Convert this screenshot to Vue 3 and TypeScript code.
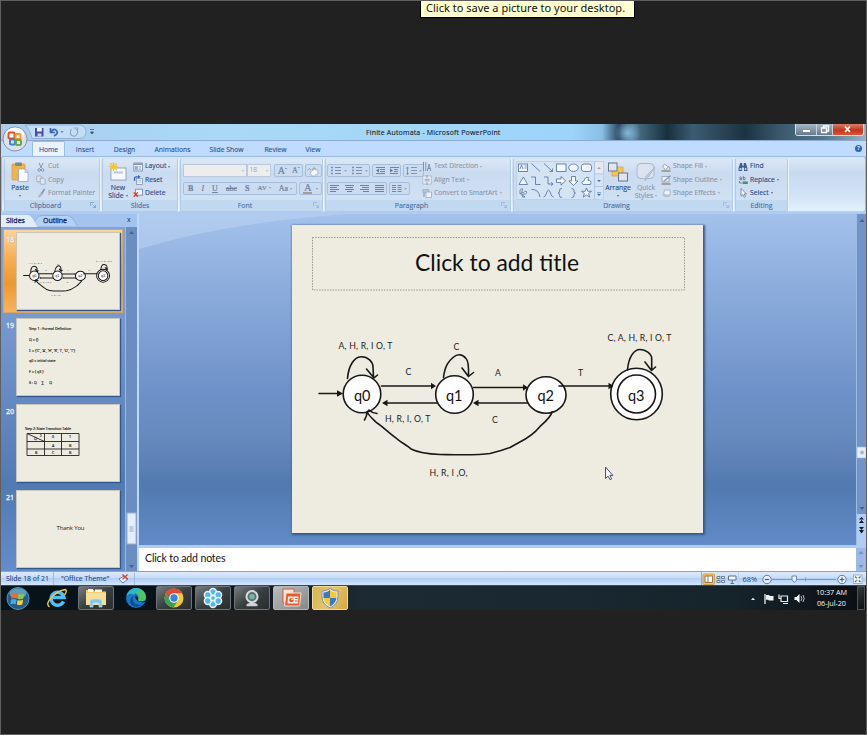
<script setup lang="ts">
interface Action { icon: string; label: string; menu?: boolean }

const tabs = [
  { label: 'Home', x: 'home' }, { label: 'Insert', x: 'insert' }, { label: 'Design', x: 'design' },
  { label: 'Animations', x: 'anim' }, { label: 'Slide Show', x: 'show' }, { label: 'Review', x: 'review' },
  { label: 'View', x: 'view' },
]
const clipboard: Action[] = [
  { icon: 'cut', label: 'Cut' }, { icon: 'copy', label: 'Copy' }, { icon: 'brush', label: 'Format Painter' },
]
const slideActions: Action[] = [
  { icon: 'layout', label: 'Layout', menu: true }, { icon: 'reset', label: 'Reset' }, { icon: 'del', label: 'Delete' },
]
const paragraphActions: Action[] = [
  { icon: 'dir', label: 'Text Direction', menu: true }, { icon: 'align', label: 'Align Text', menu: true },
  { icon: 'smart', label: 'Convert to SmartArt', menu: true },
]
const shapeActions: Action[] = [
  { icon: 'fill', label: 'Shape Fill', menu: true }, { icon: 'outline', label: 'Shape Outline', menu: true },
  { icon: 'effects', label: 'Shape Effects', menu: true },
]
const editing: Action[] = [
  { icon: 'find', label: 'Find' }, { icon: 'replace', label: 'Replace', menu: true }, { icon: 'select', label: 'Select', menu: true },
]

const icons: Record<string, string> = {
  cut: '<g fill="none" stroke="#8795ad" stroke-width="1"><path d="M3.2 1l2 5M7 1L4.6 6"/><circle cx="3.2" cy="8" r="1.3"/><circle cx="6.6" cy="8" r="1.3"/></g>',
  copy: '<g fill="#dfe6f0" stroke="#97a4ba" stroke-width=".8"><path d="M.8 1h4l1 1v4.6h-5z"/><path d="M4.2 3.2h3.6l1.4 1.4v4.6h-5z"/></g>',
  brush: '<path d="M9 .6L5.4 5 6.6 6z" fill="#8795ad"/><path d="M8.6 1L5.6 5.4" stroke="#8795ad" stroke-width="1.6"/><path d="M4.8 4.6l2 1.8L4 9.2H1.6z" fill="#a9b4c6"/>',
  layout: '<rect x=".8" y="1" width="8.6" height="8" fill="#eef3fa" stroke="#7488a8" stroke-width=".8"/><path d="M1 2.2h8" stroke="#7488a8" stroke-width="1.4"/><path d="M2.2 4.6h2.4v3H2.200zM5.8 4.600h2.400M5.800 6h2.400M5.800 7.500h2.400" fill="#9fb1cf" stroke="#879bbb" stroke-width=".7"/>',
  reset: '<rect x="3.4" y="3.600" width="6" height="5.800" fill="#f0f4fa" stroke="#8193b0" stroke-width=".8"/><path d="M4.500 5.400h3.800M4.500 7.200h3.800" stroke="#9bacc8" stroke-width=".7"/><path d="M1.500 6V3.500Q1.500 1.800 3.500 1.800h2" fill="none" stroke="#2d68b8" stroke-width="1.300"/><path d="M5 0l2.600 1.800L5 3.700z" fill="#2d68b8"/>',
  del: '<rect x="2.600" y="1.200" width="7" height="6" fill="#eef4fc" stroke="#6e86ac" stroke-width=".8"/><path d="M.8 4.400l4 4.400M4.800 4.400l-4 4.400" stroke="#d63a22" stroke-width="1.400"/>',
  dir: '<g fill="none" stroke="#7f90ac" stroke-width="1"><path d="M1.500 0v9M3.800 0v9"/><path d="M5.400 9l1.700-7 1.700 7M5.800 6.500h2.600"/></g>',
  align: '<rect x=".8" y="1" width="8.400" height="8" fill="#e9eff8" stroke="#a5b3c9" stroke-width=".8"/><path d="M5 0v3M5 10V7M2.600 4.300h5M2.600 5.900h5" stroke="#8192af" stroke-width=".8"/>',
  smart: '<path d="M.8 1.500h6v3h-6z" fill="#b8c5d9" stroke="#9aa9c0" stroke-width=".7"/><path d="M4 4h5.500v5.500H4z" fill="#eaf0f8" stroke="#9aa9c0" stroke-width=".8"/><path d="M2 5v4" stroke="#9aa9c0" stroke-width="1.400"/>',
  fill: '<path d="M3.500 2l4 3-3 2.500-3-2.500z" fill="#eef2f8" stroke="#8998b1" stroke-width=".8"/><path d="M7.500 4.500q2 1 1.500 3" fill="none" stroke="#8998b1"/><rect x=".5" y="8" width="9" height="2" fill="#a2a19a"/>',
  outline: '<path d="M1 1.500h7v5.500H1z" fill="#edf1f8" stroke="#8c9bb5" stroke-width=".8"/><path d="M2.600 6.500L9.500.8" stroke="#8998b1" stroke-width="1.400"/><rect x=".5" y="8" width="9" height="2" fill="#a2a19a"/>',
  effects: '<path d="M3.500 2H9v5H5L2.500 6z" fill="#f0f3f8" stroke="#9aa8be" stroke-width=".8"/><path d="M.5 6.500l3 2.500H8l1.500-2H5z" fill="#b5c0d1"/>',
  find: '<path d="M2.200 1h2v2.500h1.600V1h2l1.600 5v3H6V5.500H4V9H.6V6z" fill="#3d5d94"/><path d="M1.600 6h1.800v2H1.600zM6.800 6h1.600v2H6.800z" fill="#b9cdec"/>',
  replace: '<path d="M1.300 2.400q1.600-.9 2.200.4v2H2q-1.200-.9 0-1.500h1.500M5.300.8v4q2 .5 2-1.300T5.300 3" fill="none" stroke="#5b6d8a" stroke-width=".8"/><path d="M1.500 6v2H4" stroke="#5b6d8a" stroke-width=".8" fill="none"/><path d="M4.600 6.400H9.800V9H4.600z" fill="#42966d"/>',
  select: '<path d="M3 .6v7.600l1.900-1.700 1.300 2.700 1.300-.7-1.300-2.600h2.300z" fill="#fff" stroke="#617596" stroke-width=".8"/>',
}

const thumbs = [18, 19, 20, 21]
const definition = ['Step 1 : Formal Definition', 'Q = {}', "Σ = {'C', 'A', 'H', 'R', 'I', 'O', 'T'}", 'q0 = initial state', 'F = { q3 }', 'δ : Q     ∑      Q']
const textStyle = ['B', 'I', 'U', 'abc', 'S', 'AV', 'Aa']
</script>

<template>
  <div class="screen">
    <div class="tip">Click to save a picture to your desktop.</div>
    <div class="desktop">
      <div class="window">
        <header class="titlebar">
          <svg class="qat" width="100" height="16" viewBox="0 0 100 16">
            <path d="M24 1h55q6 1 6 6.800T79 14.500H31Q29 5 24 1z" fill="#d3e6f8" fill-opacity=".6" stroke="#86a7c9" stroke-width=".8" />
            <path d="M34 4h8.500v8.500H34z" fill="#474fa0" /><path d="M36 4h4.800v3.500H36z" fill="#eef2fb" /><path d="M36.500 9.500h4v3h-4z" fill="#c8d0ec" />
            <path d="M49.500 4v4.500H54M50 8q3-4.500 5.500-1.500T53 12" fill="none" stroke="#3a66b8" stroke-width="1.700" />
            <path d="M59.500 7h3l-1.500 2z" fill="#6884ab" />
            <path d="M70.500 5q-2.500 4.500.5 6.500t5-1.500-1-4.500M72.500 4h4v3.500" fill="none" stroke="#8ea6c4" stroke-width="1.200" />
            <path d="M89 5.500h4M89.500 8h3L91 10z" fill="#34527c" stroke="#34527c" stroke-width=".7" />
          </svg>
          <span class="caption">Finite Automata - Microsoft PowerPoint</span>
          <div class="controls">
            <span class="ctl"><svg width="20" height="11"><path d="M7 7h7" stroke="#fff" stroke-width="2" /></svg></span>
            <span class="ctl"><svg width="15" height="11"><path d="M4.500 4h5v4.500h-5zM6.500 3.500V2h5v5H10" fill="none" stroke="#fff" stroke-width="1.300" /></svg></span>
            <span class="ctl close"><svg width="30" height="11"><path d="M12 2.500l5 5.500M17 2.500L12 8" stroke="#fff" stroke-width="1.800" /></svg></span>
          </div>
        </header>
        <svg class="orb" width="28" height="28" viewBox="0 0 28 28">
          <circle cx="14" cy="14" r="12" fill="#dce2ec" stroke="#8392ab" />
          <ellipse cx="14" cy="8.500" rx="9" ry="6" fill="#f9fbfd" />
          <g fill="none" stroke-width="2"><rect x="7.500" y="7.500" width="6" height="6" rx="1" stroke="#d9502d" /><rect x="14.500" y="9" width="5" height="5" rx="1" stroke="#ef982f" /><rect x="9" y="14.500" width="5" height="5" rx="1" stroke="#4282c8" /><rect x="15" y="15" width="5" height="5" rx="1" stroke="#68a946" /></g>
        </svg>

        <nav class="tabs">
          <span v-for="t in tabs" :key="t.label" class="tab" :class="t.x">{{ t.label }}</span>
          <span class="help">?</span>
        </nav>

        <div class="ribbon">
          <section class="group g-clip">
            <div class="body">
              <div class="big dark paste">
                <svg width="20" height="22" viewBox="0 0 20 22"><rect x="2" y="3" width="13" height="16" rx="1" fill="#edb54c" stroke="#d19a3d" stroke-width=".7" /><rect x="5" y="1.500" width="7" height="3.500" rx="1" fill="#7b8596" /><path d="M8.500 8h7l2.500 3v9.500H8.500z" fill="#fbfcfe" stroke="#94a5bd" stroke-width=".8" /><path d="M15 8v3.500h3" fill="#d0dbea" stroke="#94a5bd" stroke-width=".6" /></svg>
                <b>Paste</b><i class="dd"></i>
              </div>
              <div class="list muted"><div v-for="a in clipboard" :key="a.label" class="act"><svg width="10" height="10" v-html="icons[a.icon]"></svg><span>{{ a.label }}</span></div></div>
            </div>
            <footer class="shifted">Clipboard<svg class="launch" width="6" height="6"><path d="M.5 4V.5H4M2.500 2.500l3 3M5.500 3v2.500H3" fill="none" stroke="#7e9cc2" stroke-width=".8" /></svg></footer>
          </section>
          <section class="group g-slides">
            <div class="body">
              <div class="big dark newslide">
                <svg width="20" height="22" viewBox="0 0 20 22"><rect x="3" y="7" width="15" height="12" fill="#f5f8fc" stroke="#8393ad" stroke-width=".8" /><path d="M6 10.500h9v2H6z" fill="#bcc9da" /><path d="M5.500 1v9M1 5.500h9M2.200 2.200l6.600 6.600M8.800 2.200L2.200 8.800" stroke="#f4c52f" stroke-width="1.300" /></svg>
                <b>New</b><b>Slide<i class="dd"></i></b>
              </div>
              <div class="list dark"><div v-for="a in slideActions" :key="a.label" class="act"><svg width="10" height="10" v-html="icons[a.icon]"></svg><span>{{ a.label }}</span><i v-if="a.menu" class="dd"></i></div></div>
            </div>
            <footer>Slides</footer>
          </section>
          <section class="group g-font">
            <div class="body stack">
              <div class="tools">
                <div class="combo face"><i class="dd"></i></div><div class="combo size">18<i class="dd"></i></div>
                <div class="seg grow"><span class="serif up">A<sup>ˆ</sup></span><span class="serif down">A<sup>ˇ</sup></span></div>
                <div class="seg clear"><svg width="14" height="12"><path d="M1.500 5q2-3 3.500 0M6 5q2-4 3.500-1" fill="none" stroke="#8f9db5" /><path d="M4 8l4-4 4 1.500v3L8.500 11H6z" fill="#f3f5f9" stroke="#9daac0" stroke-width=".8" /></svg></div>
              </div>
              <div class="tools">
                <div class="seg styles"><span v-for="s in textStyle" :key="s" class="serif" :class="'s-' + s">{{ s }}<i v-if="s.length === 2" class="dd"></i></span></div>
                <div class="seg color"><span class="serif">A</span><i class="dd"></i></div>
              </div>
            </div>
            <footer class="shifted">Font<svg class="launch" width="6" height="6"><path d="M.5 4V.5H4M2.500 2.500l3 3M5.500 3v2.500H3" fill="none" stroke="#9db2cf" stroke-width=".8" /></svg></footer>
          </section>
          <section class="group g-para">
            <div class="body">
              <div class="stack paracol">
                <div class="tools">
                  <div class="seg"><svg width="41" height="12"><g stroke="#7b8dac" stroke-width="1"><path d="M7 2.500h6M7 5.500h6M7 8.500h6M28 2.500h6M28 5.500h6M28 8.500h6" /><path d="M3 2.500h2M3 5.500h2M3 8.500h2M24 2.500h2M24 5.500h2M24 8.500h2" stroke-width="1.500" /></g><path d="M16 5h3l-1.500 2zM37 5h3l-1.500 2z" fill="#9aaac3" /></svg></div>
                  <div class="seg"><svg width="27" height="12"><g stroke="#71839f"><path d="M3 2.500h9M7 4.500h5M7 6.500h5M3 8.500h9M17 2.500h9M21 4.500h4M21 6.500h4M17 8.500h8" /></g><path d="M6 3.500v4L3 5.500zM17 3.500v4l3-2z" fill="#60769a" /></svg></div>
                  <div class="seg"><svg width="19" height="12"><path d="M7 2.500h6M7 5.500h6M7 8.500h6" stroke="#8193ae" /><path d="M3.500 2v7M2.500 3.500l1-1.500 1 1.500M2.500 8l1 1.500 1-1.500" stroke="#6c82a5" fill="none" stroke-width=".8" /><path d="M15 5h3l-1.500 2z" fill="#9aaac3" /></svg></div>
                </div>
                <div class="tools">
                  <div class="seg"><svg width="58" height="12"><g stroke="#6d80a1"><path d="M2 2.500h9M2 4.500h7M2 6.500h9M2 8.500h6M17 2.500h9M18 4.500h7M17 6.500h9M19 8.500h5M32 2.500h9M34 4.500h7M32 6.500h9M35 8.500h6M47 2.500h9M47 4.500h9M47 6.500h9M47 8.500h9" /></g></svg></div>
                  <div class="seg"><svg width="19" height="12"><path d="M2 2.500h4M2 4.500h4M2 6.500h4M2 8.500h4M7.500 2.500h4M7.500 4.500h4M7.500 6.500h4M7.500 8.500h4" stroke="#7386a5" /><path d="M14 5h3l-1.500 2z" fill="#9aaac3" /></svg></div>
                </div>
              </div>
              <div class="list muted"><div v-for="a in paragraphActions" :key="a.label" class="act"><svg width="10" height="10" v-html="icons[a.icon]"></svg><span>{{ a.label }}</span><i class="dd"></i></div></div>
            </div>
            <footer class="shifted">Paragraph<svg class="launch" width="6" height="6"><path d="M.5 4V.5H4M2.500 2.500l3 3M5.500 3v2.500H3" fill="none" stroke="#9db2cf" stroke-width=".8" /></svg></footer>
          </section>
          <section class="group g-draw">
            <div class="body">
              <svg class="gallery" width="88" height="39" viewBox="515 160 88 39">
                <rect x="515.500" y="160.500" width="87" height="38" fill="#d5e4f5" stroke="#b9cde6" stroke-width=".8" />
                <g fill="#f4f8fd" stroke="#4f6c9b" stroke-width=".8">
                  <rect x="517.500" y="163" width="9" height="7.500" /><path d="M519 168l1.500-4 1.500 4m1.500-3h2m-2 2h2" fill="none" />
                  <path d="M530.500 162.500l8.500 8M543 162.500l8.500 8m-3 0h3v-3" fill="none" />
                  <rect x="555.500" y="163" width="9.500" height="7.500" /><ellipse cx="572.500" cy="166.700" rx="4.800" ry="3.700" /><rect x="580.500" y="163" width="10" height="7.500" rx="2.500" />
                  <path d="M518 183.500l4.300-7.500 4.300 7.500z" /><path d="M530 176h4.500v7.500h5M543 176h4v7h5m-2-1.700l2 1.700-2 1.700" fill="none" />
                  <path d="M555.500 178h4.500v-2.500l4.500 4.300-4.500 4.300V181.500h-4.500zM570.500 175.500h4v4.500h2.500l-4.500 4.500-4.500-4.500h2.500z" /><path d="M578 183.500q-2.500-3 1-3.500 1-4.500 4.500-3.500l-.5 3q4-.5 2.500 4z" transform="translate(4)" />
                  <path d="M519 189q4-3 2 1t4 0q2 3-2 3t1 3q-3 1-3-2t-2-1z" /><path d="M530.500 188.500q7-.5 8.500 7.500M542.500 196q2 0 3-4 2-6 4 0 1 4 3 4" fill="none" />
                  <path d="M561 187.500q-3 0-2.500 2.500.3 2-1.500 2 1.800 0 1.500 2.500-.3 2 2.500 2M570.500 187.500q3 0 2.500 2.500-.3 2 1.500 2-1.800 0-1.500 2.500.3 2-2.500 2" fill="none" />
                  <path d="M585.500 187l1.300 3.300h3.700l-2.900 2.200 1.200 3.700-3.300-2.200-3.300 2.200 1.200-3.700-2.900-2.200h3.700z" />
                </g>
                <path d="M593.500 161v37" stroke="#abc4e3" /><rect x="594" y="161" width="8" height="11.500" fill="#e7e9ee" /><path d="M594 173h8M594 185.500h8" stroke="#a9c2e3" stroke-width=".8" />
                <path d="M596 168h4l-2-2z" fill="#9aa5b6" /><path d="M596 179h4l-2 2zM596 193h4l-2 2zM596 191.500h4v.8h-4z" fill="#4b70a9" />
              </svg>
              <div class="big dark arrange">
                <svg width="22" height="22" viewBox="0 0 22 22"><path d="M5 6h11v9H5z" fill="#f4c74b" stroke="#cda437" stroke-width=".7" /><rect x="1.500" y="2" width="8.500" height="8" fill="#e1e6ed" stroke="#66758f" /><rect x="11.500" y="12" width="9" height="8" fill="#dfe4ec" stroke="#66758f" /></svg>
                <b>Arrange</b><i class="dd"></i>
              </div>
              <div class="big muted quick">
                <svg width="22" height="22" viewBox="0 0 22 22"><rect x="2" y="2.500" width="17" height="15" rx="4" fill="#dae3ef" stroke="#a9b7ca" /><path d="M20 6l-6 9-4 5 1-5z" fill="#c3ccd9" stroke="#a3afc2" stroke-width=".7" /></svg>
                <b>Quick</b><b>Styles<i class="dd"></i></b>
              </div>
              <div class="list muted"><div v-for="a in shapeActions" :key="a.label" class="act"><svg width="10" height="10" v-html="icons[a.icon]"></svg><span>{{ a.label }}</span><i class="dd"></i></div></div>
            </div>
            <footer class="shifted">Drawing<svg class="launch" width="6" height="6"><path d="M.5 4V.5H4M2.500 2.500l3 3M5.500 3v2.500H3" fill="none" stroke="#9db2cf" stroke-width=".8" /></svg></footer>
          </section>
          <section class="group g-edit">
            <div class="body"><div class="list dark"><div v-for="a in editing" :key="a.label" class="act"><svg width="10" height="10" v-html="icons[a.icon]"></svg><span>{{ a.label }}</span><i v-if="a.menu" class="dd"></i></div></div></div>
            <footer>Editing</footer>
          </section>
        </div>

        <main class="workspace">
          <aside class="outline">
            <div class="sidetabs">
              <svg width="110" height="13" viewBox="0 0 110 13"><path d="M31 13Q35 1.500 41 1.500h25q5 0 11 11.500z" fill="#b4d0f3" stroke="#88aada" stroke-width=".8" /><path d="M0 13V1h27q4 0 9 12z" fill="#e2edfb" /></svg>
              <span class="st1">Slides</span><span class="st2">Outline</span><span class="sx">x</span>
            </div>
            <div class="thumbwrap">
              <div class="thumbs">
                <div v-for="n in thumbs" :key="n" class="thumb" :class="{ active: n === 18 }">
                  <span class="num">{{ n }}</span>
                  <div class="mini">
                    <svg v-if="n === 18" width="103" height="78" viewBox="293 225 411 309" preserveAspectRatio="none"><use href="#automaton" stroke-width="4" /></svg>
                    <svg v-else-if="n === 19" width="103" height="78"><text v-for="(line, i) in definition" :key="i" x="12" :y="11 + i * 10.800" class="tiny">{{ line }}</text></svg>
                    <svg v-else-if="n === 20" width="103" height="78">
                      <text x="8" y="24.500" class="tiny" textLength="46">Step 2: State Transition  Table</text>
                      <path d="M10 28.500h52v22H10zM10 36.500h52M10 44h52M27.500 28.500v22M44.500 28.500v22M10 28.500l17.500 8" fill="none" stroke="#222" stroke-width=".9" />
                      <g class="tiny"><text x="23" y="32">Σ</text><text x="17" y="35">Q</text><text x="35" y="32.500">0</text><text x="52" y="32.500">1</text><text x="35" y="41.500">A</text><text x="52" y="41.500">B</text><text x="18" y="49">B</text><text x="35" y="49">C</text><text x="52" y="49">B</text></g>
                    </svg>
                    <svg v-else width="103" height="78"><text x="39.500" y="38.500" class="thanks" textLength="28">Thank You</text></svg>
                  </div>
                </div>
              </div>
              <div class="sbar side"><svg width="11" height="344"><path d="M3 7h5L5.500 4zM3 338h5l-2.500 3z" fill="#46618f" /><rect x="1" y="286" width="9" height="31" fill="#e4edf8" stroke="#98b3d8" /><path d="M3.500 300h4M3.500 302h4M3.500 304h4" stroke="#8297b6" stroke-width=".8" /></svg></div>
            </div>
          </aside>
          <div class="editor">
            <div class="canvas">
              <svg class="swoosh" width="300" height="36" viewBox="0 0 300 36"><path d="M0 0H210Q90 8 0 35z" fill="#bdd4f2" fill-opacity=".55" /></svg>
              <div class="slide">
                <svg width="411" height="308" viewBox="292 225 411 308">
                  <rect x="312.500" y="237.500" width="372" height="52.500" fill="none" stroke="#99978e" stroke-width="1" stroke-dasharray="1.500 1.200" />
                  <text x="415" y="271" class="title" textLength="164" lengthAdjust="spacingAndGlyphs">Click to add title</text>
                  <g id="automaton">
                    <g fill="#fff" class="ink"><circle cx="362" cy="394" r="18.800" /><circle cx="454.500" cy="394.500" r="18.800" /><ellipse cx="546" cy="395" rx="20" ry="18.300" /><circle cx="636.500" cy="394" r="25.800" /><circle cx="636.500" cy="394" r="19" /></g>
                    <g fill="none" class="ink">
                      <path d="M319 393.500H338M381.500 386H432M437 403H386M473.500 387.500H524M528 403H478M559 386H609" />
                      <path d="M347.500 378.500C348.500 366 354 357 361 356.700S373 362 373 367L373.500 377M366.500 369l7.500 9 3.500-3" />
                      <path d="M443.500 377.500C445 365 449 361 453 357.500S462 353.500 466 358.500Q469 361 468.500 376M462 368l6.500 8.500 5-4" />
                      <path d="M627.500 370C628.500 357 634 349.500 640 349.500S652 354 651.700 359V370M645 362l6.500 8.500 4-3.500" />
                      <path d="M552 412C551 417 544 423 540 426.500 534 434 528 438 519 442.500L510 447.500 501 450.500 490 453.500C478 455.500 465 455 440 454.500 426 454 418 452.500 411 449 407 445 400 442 396 438 389 433 382 426 377 423 373 419 369 416 367 412M364.500 420Q367 416 367 412L369 410Q372 413 377 413.500" />
                    </g>
                    <path d="M343 393.500l-6-3.300v6.600zM436 386l-5-3.300v6.600zM382 403l5.500-3.300v6.600zM528 387.500l-5-3.300v6.600zM473 403l5.500-3.300v6.600zM613.500 386l-5-3.300v6.600z" fill="#161616" />
                    <g class="node"><text x="354" y="400.500" textLength="16.500" lengthAdjust="spacingAndGlyphs">q0</text><text x="446" y="400.500" textLength="16.500" lengthAdjust="spacingAndGlyphs">q1</text><text x="537.500" y="401" textLength="16.500" lengthAdjust="spacingAndGlyphs">q2</text><text x="628" y="400.500" textLength="16.500" lengthAdjust="spacingAndGlyphs">q3</text></g>
                    <g class="edge">
                      <text x="338.500" y="348.500" textLength="54">A, H, R, I O, T</text><text x="453.500" y="350">C</text><text x="405.500" y="375">C</text>
                      <text x="385" y="422" textLength="45.500">H, R, I, O, T</text><text x="495" y="376">A</text><text x="492" y="423">C</text><text x="578" y="376">T</text>
                      <text x="607.500" y="340.500" textLength="64">C, A, H, R, I O, T</text><text x="429.500" y="476" textLength="38">H, R, I ,O,</text>
                    </g>
                  </g>
                  <path d="M605.500 467v11.500l2.600-2.300 1.900 3.500 1.700-.9-1.800-3.400h3z" fill="#f4f6fc" stroke="#4b5269" stroke-width="1" />
                </svg>
              </div>
              <div class="sbar main"><svg width="10" height="331"><path d="M2.500 8h5L5 5zM2.500 293h5L5 296z" fill="#46618f" /><rect x="0" y="233" width="9" height="11" fill="#e9eff8" stroke="#9fb5d3" stroke-width=".6" /><circle cx="5" cy="238.500" r="2" fill="#a9b8c9" /><rect y="300" width="10" height="31" fill="#b2cdf3" /><path d="M2 305.500L4.500 303 7 305.500zM2 309L4.500 306 7 309zM2 313h5L4.500 316zM2 316h5L4.500 319.500z" fill="#101828" /></svg></div>
            </div>
            <div class="notes"><span>Click to add notes</span><div class="sbar nb"><svg width="10" height="23"><path d="M2.500 6h5L5 3zM2.500 17h5L5 20z" fill="#7090bd" /></svg></div></div>
          </div>
        </main>

        <div class="status">
          <span class="s1">Slide 18 of 21</span><span class="s2">"Office Theme"</span>
          <svg class="spell" width="12" height="12"><path d="M1 6l5-3 4 3-5 4z" fill="#f6f8fc" stroke="#5b79b0" /><path d="M4.500 1.500l5 5M9.500 1.500l-5 5" stroke="#d9432d" stroke-width="1.400" /></svg>
          <span class="rule"></span>
          <svg class="zoom" width="165" height="14" viewBox="701 571 165 14">
            <path d="M701.500 571v14" stroke="#8aabd8" /><rect x="703" y="573" width="11.500" height="10.500" rx="1" fill="#fbc35d" stroke="#d09539" stroke-width=".8" /><rect x="705" y="575" width="7.500" height="6.500" fill="#fff" stroke="#7b6338" stroke-width=".8" /><path d="M708 575v6.500" stroke="#7b6338" stroke-width=".8" />
            <path d="M717 575.500h3v2h-3zM721.500 575.500h3v2h-3zM717 579.500h3v2h-3zM721.500 579.500h3v2h-3z" fill="#f2f6fb" stroke="#5c7295" stroke-width=".9" /><path d="M728.500 575h7.500v4h-7.500zM732.200 579v3.500M730.500 582.500h3.500" fill="#f2f6fb" stroke="#5c7295" stroke-width="1" /><path d="M738.500 571v14" stroke="#bad1f0" />
            <text x="742.500" y="581" textLength="14.500" lengthAdjust="spacingAndGlyphs">68%</text>
            <path d="M772 578.500h64M805.500 576.500v4" stroke="#7f98bc" /><circle cx="767" cy="578.500" r="4.200" fill="#e8f0fa" stroke="#5b759d" /><path d="M764.800 578.500h4.400" stroke="#435d87" stroke-width="1.200" />
            <path d="M792 575h4.500v4l-2.200 2.500-2.300-2.500z" fill="#e9f0f9" stroke="#5b759d" stroke-width=".8" /><circle cx="842" cy="578.500" r="4.200" fill="#e8f0fa" stroke="#5b759d" /><path d="M839.800 578.500h4.400M842 576.300v4.400" stroke="#435d87" stroke-width="1.200" />
            <rect x="853.500" y="574" width="8.500" height="8.500" fill="#f4f7fb" stroke="#8ea2be" stroke-width=".8" /><path d="M855 575.500l5.500 5.500M860.500 575.500L855 581" stroke="#5a7092" stroke-width="1.200" /><rect x="856.500" y="577" width="2.500" height="2.500" fill="#f4f7fb" />
          </svg>
        </div>

        <div class="taskbar">
          <span class="task start"><svg width="26" height="25" viewBox="0 0 26 25"><circle cx="13" cy="12.500" r="11" fill="#225c88" stroke="#5296b5" /><ellipse cx="13" cy="7.500" rx="8.500" ry="5" fill="#78b8d6" opacity=".7" /><path d="M7 8q3-2 5.500-.5l-.8 5Q9 11.300 6.300 12.700z" fill="#ec6b35" /><path d="M13.500 8q3 1.300 5.500-.2l-.7 4.700q-3 1.500-5.500.2z" fill="#8cc94a" /><path d="M6 13.700q3-1.400 5.500 0l-.7 4.600q-2.500-1.300-5.500 0z" fill="#4ba4e3" /><path d="M12.600 13.900q2.800 1.200 5.500-.2l-.8 4.800q-3 1.300-5.500 0z" fill="#fbcd3c" /></svg></span>
          <span class="task plain"><svg width="22" height="22" viewBox="0 0 22 22"><path d="M17.500 14.500A6.500 6.500 0 1 1 18 10.500H6.500" fill="none" stroke="#4fc0f0" stroke-width="3.400" /><path d="M3.500 20Q-1 17 6 10T19.500 2.500Q21.500 4 18.500 8" fill="none" stroke="#f3c84a" stroke-width="1.400" /></svg></span>
          <span class="task box"><svg width="24" height="22" viewBox="0 0 24 22"><path d="M2 3h8l1 1.500h11V18H2z" fill="#edcf79" /><path d="M4 2h5v3H4zM11 2.500h7V5h-7z" fill="#f8f2da" /><path d="M2 6h20v12H2z" fill="#f7e096" /><path d="M6 20v-5q0-3 3-3h6q3 0 3 3v5h-3v-4H9v4z" fill="#85c7ea" stroke="#b9e1f4" stroke-width=".7" /></svg></span>
          <span class="task plain edge-app"><svg width="22" height="22" viewBox="0 0 22 22"><circle cx="11" cy="11" r="10" fill="#1579c7" /><path d="M1.500 9Q4 .8 12 1q8 1 9 8.500 0 5-5 5-4 0-3-2 2-5-3-6.500T1.500 9z" fill="#4cc66d" /><path d="M1.500 9Q4 .8 12 1q3 .4 5 2-7 0-8 5-4-3-7.500 1z" fill="#28b6d2" /><path d="M10 8q-3 2-2 6t9 4q-8 4-11-1T10 8z" fill="#0d4a92" /><path d="M10.500 8.500q-1 2.500 1.500 5t8 1.500l1-2q-2 1.500-5 1.500t-3-2q1.500-2-2.500-4z" fill="#101a26" /></svg></span>
          <span class="task box"><svg width="22" height="22" viewBox="0 0 22 22"><circle cx="11" cy="11" r="9.500" fill="#f3c72f" /><path d="M2.800 6.200A9.500 9.500 0 0 1 19.200 6.200H11l-4.200 7.300z" fill="#dd4a38" /><path d="M2.800 6.200A9.500 9.500 0 0 0 10.500 20.500L15 13.400H7z" fill="#35a155" /><circle cx="11" cy="11" r="4.800" fill="#fff" /><circle cx="11" cy="11" r="3.700" fill="#3c82e4" /></svg></span>
          <span class="task box"><svg width="22" height="22" viewBox="0 0 22 22"><g fill="#57b7e4" stroke="#e4f6fc" stroke-width="1.500"><circle cx="11" cy="5" r="3.400" /><circle cx="11" cy="17" r="3.400" /><circle cx="5.800" cy="8" r="3.400" /><circle cx="16.200" cy="8" r="3.400" /><circle cx="5.800" cy="14" r="3.400" /><circle cx="16.200" cy="14" r="3.400" /><circle cx="11" cy="11" r="2.600" /></g></svg></span>
          <span class="task box"><svg width="20" height="20" viewBox="0 0 22 22"><path d="M5 18q6-4 12 0v2H5z" fill="#cfd4d6" /><circle cx="11" cy="9.500" r="7.200" fill="#d7dbdc" /><circle cx="11" cy="9.500" r="5" fill="#606d70" /><circle cx="11" cy="9.500" r="3" fill="#6eb6a7" /></svg></span>
          <span class="task box light"><svg width="24" height="22" viewBox="0 0 24 22"><path d="M4 2h11v14H4z" fill="#f9e4d8" stroke="#d65a31" /><path d="M7 6h15l-1.500 13H5.500z" fill="#e05e32" stroke="#f8dfd3" /><path d="M9 9.500h10.500l-.6 7H8.500z" fill="#faeee8" /><circle cx="12.500" cy="13" r="2.300" fill="#dd5b2e" /><path d="M12.500 13V10.500L15 13z" fill="#faeee8" /><path d="M16 11.500h2.500M16 14h2.500" stroke="#dd5b2e" /></svg></span>
          <span class="task box gold"><svg width="22" height="22" viewBox="0 0 22 22"><path d="M11 1.500q4 3 8 2.500v6q0 7-8 11-8-4-8-11V4q4 .5 8-2.500z" fill="#e8edf1" stroke="#8290a3" /><path d="M11 3Q8 5.500 4.500 5.500V11H11zM11 11h6.500Q17 16 11 19.500z" fill="#3b78c3" /><path d="M11 3q3 2.500 6.500 2.500V11H11zM11 11H4.500q.5 5 6.500 8.500z" fill="#f4c936" /></svg></span>
          <svg class="tray" width="58" height="24" viewBox="747 586 58 24"><path d="M749 600h4l-2-2.200z" fill="#e8ecef" /><path d="M763 594v10" stroke="#fff" stroke-width="1.200" /><path d="M764 595h3l1 1h3.500v4.500H767l-1-.8h-2z" fill="#eef1f3" /><path d="M779 596h6.500v5.500H779zM777 594.500v4h2M781 603.500h5" fill="none" stroke="#e7ebee" stroke-width="1.200" /><path d="M792.500 597h2l3-3v9l-3-3h-2z" fill="#fff" /><path d="M799 596q1.500 2.500 0 5M801 595q2.300 3.500 0 7" stroke="#cfd5da" fill="none" stroke-width=".9" /></svg>
          <div class="clock"><span>10:37 AM</span><span>06-Jul-20</span></div>
          <span class="peek"></span>
        </div>
      </div>
    </div>
  </div>
</template>

<style>
body { background: #212121; }
</style>
<style scoped>
* { box-sizing: border-box; }
svg { display: block; flex: none; }
.screen { width: 867px; height: 735px; background: #212121; border: 1px solid #5f5f5f; position: relative; overflow: hidden; font-family: "Open Sans", "Noto Sans", sans-serif; font-size: 6.7px; line-height: 1; }
.tip { position: absolute; left: 419px; top: -1px; width: 215px; height: 18px; border: 1px solid #000; background: #ffffcf; color: #111; font: 11px/14px "Noto Sans", sans-serif; padding-left: 5px; white-space: nowrap; letter-spacing: .01px; }
.desktop { padding-top: 123px; }
.window { width: 865px; height: 486px; position: relative; display: flex; flex-direction: column; background: #bdd7fb; }
.titlebar { height: 17px; flex: none; display: flex; justify-content: space-between; background: radial-gradient(circle at 627px 9px, #86b7dc 0, #86b7dc00 13px), linear-gradient(90deg, #abcdea 0, #a9d9f5 25%, #9dd4fa 66%, #89bfe4 69.500%, #26435c 71.500%, #4f788f 73%, #18303e 77%, #3b5c72 80%, #1b3342 86%, #3a586c 90%, #54758a 95%, #9ab2c2 100%); border-bottom: 1px solid #8da9cd; }
.qat { margin: 0; flex: none; width: 100px; }
.caption { color: #10191f; font-size: 7px; line-height: 17px; letter-spacing: .17px; width: 145px; margin-left: 265px; white-space: nowrap; -webkit-text-stroke: .1px #10191f; }
.controls { display: flex; height: 12px; margin-left: auto; margin-right: 2px; border: 1px solid #d6dfe8; border-top: 0; border-radius: 0 0 3px 3px; overflow: hidden; }
.ctl { background: linear-gradient(#a8b9c5, #64798a); border-right: 1px solid #c6d2dc; }
.close { border: 0; background: linear-gradient(#da806d, #c5351f 55%, #d55736); }
.orb { position: absolute; left: 0; top: 1px; z-index: 2; }
.tabs { height: 15px; flex: none; background: #bfdbff; display: flex; align-items: center; padding-left: 31px; color: #2a4d86; position: relative; font-size: 6.800px; -webkit-text-stroke: .1px #2a4d86; }
.tab { height: 15px; line-height: 17px; text-align: center; white-space: nowrap; }
.home { width: 33px; background: #eaf2fc; border: 1px solid #9dbce2; border-bottom: 0; border-radius: 2px 2px 0 0; line-height: 15px; }
.insert { width: 40px; } .design { width: 39px; } .anim { width: 57px; } .show { width: 51px; } .review { width: 47px; } .view { width: 28px; }
.help { margin-left: auto; margin-right: 4px; width: 7px; height: 7px; border-radius: 50%; background: #2b63c1; color: #fff; font-size: 6px; line-height: 7px; text-align: center; font-weight: 700; }
.ribbon { height: 56px; flex: none; display: flex; gap: 2px; padding: 1px 2px 0; background: linear-gradient(#dce8f6, #c8daf0 30%, #d3e4f6 75%, #e1f1fc); border: 1px solid #98badf; border-radius: 3px; border-bottom-color: #a0e0ef; }
.group { height: 54px; border: 1px solid #b2cae6; border-top-color: #d0dff1; border-radius: 2px; background: linear-gradient(#dbe7f5, #cadbf0 28%, #d4e3f5); display: flex; flex-direction: column; box-shadow: 1px 0 0 #ecf4fd; }
.g-clip { width: 96px; } .g-slides { width: 76px; } .g-font { width: 143px; } .g-para { width: 186px; } .g-draw { width: 220px; } .g-edit { width: 53px; }
.body { flex: 1; display: flex; padding-top: 2px; min-height: 0; }
.group footer { height: 11px; flex: none; background: #c1d8f1; color: #426ea7; text-align: center; line-height: 12px; font-size: 6.900px; position: relative; -webkit-text-stroke: .1px #426ea7; }
.group .shifted { padding-right: 13px; }
.launch { position: absolute; right: 3px; top: 2px; }
.list { display: flex; flex-direction: column; margin-top: -1px; }
.act { height: 13.800px; display: flex; align-items: center; gap: 2px; white-space: nowrap; font-size: 6.800px; }
.muted { color: #8994aa; -webkit-text-stroke: .1px #8994aa; }
.dark { color: #23467f; -webkit-text-stroke: .1px #23467f; }
.dd { display: inline-block; flex: none; width: 0; height: 0; border-left: 1.500px solid transparent; border-right: 1.500px solid transparent; border-top: 2px solid currentColor; margin-left: 2px; vertical-align: middle; opacity: .75; }
.act .dd { margin-left: 0; }
.big { display: flex; flex-direction: column; align-items: center; flex: none; }
.big b { font-weight: 400; line-height: 8px; height: 8px; white-space: nowrap; font-size: 6.900px; }
.big > svg { margin-bottom: 1px; }
.big > .dd { margin: 3px 0 0; }
.paste { width: 30px; } .newslide { width: 30px; }
.g-slides .list { padding-left: 0; }
.g-clip .list { padding-left: 1px; }
.stack { display: flex; flex-direction: column; gap: 5px; padding-top: 6px; }
.g-font .body { padding-left: 2px; padding-top: 5px; }
.tools { display: flex; gap: 2px; height: 13px; color: #71819d; }
.seg { border: 1px solid #a5bfdd; border-radius: 2px; background: #ccdcf0; display: flex; align-items: center; height: 13px; }
.combo { background: #ededed; border: 1px solid #b9c9de; display: flex; align-items: center; justify-content: space-between; padding: 0 2px; color: #9ba2ad; }
.face { width: 64px; justify-content: flex-end; } .size { width: 25px; margin-left: -2px; }
.grow { width: 29px; margin-left: 1px; justify-content: space-around; }
.clear { width: 17px; }
.serif { font-family: "Liberation Serif", serif; font-size: 8px; white-space: nowrap; -webkit-text-stroke: .2px #71819d; }
.serif sup { font-size: 6px; line-height: 0; vertical-align: 2px; }
.up { font-size: 10px; }
.styles { width: 115px; justify-content: space-between; padding: 0 4px; }
.s-B, .s-S { font-weight: 700; } .s-I { font-style: italic; } .s-U { text-decoration: underline; } .s-abc { text-decoration: line-through; }
.s-AV { font-size: 7px; }
.color { width: 23px; padding: 0 3px; justify-content: space-between; }
.color .serif { border-bottom: 2px solid #a59d92; font-size: 10px; line-height: 8px; padding: 0 1px; }
.g-para .body { padding-top: 2px; } .paracol { width: 96px; padding-top: 3px; padding-left: 1px; flex: none; }
.g-para .seg { height: 13px; }
.gallery { margin-left: 2px; }
.arrange { width: 28px; } .quick { width: 28px; }
.g-edit .list { padding-left: 2px; } .g-draw .list { padding-left: 0; margin-left: 1px; }
.workspace { flex: 1; display: flex; min-height: 0; padding-top: 2px; background: #aecbf2; }
.outline { width: 138px; flex: none; display: flex; flex-direction: column; border-right: 2px solid #bbd7fc; }
.sidetabs { height: 13px; position: relative; background: #a4c4ef; display: flex; font-size: 7px; color: #172c68; }
.sidetabs span { position: absolute; top: 3px; -webkit-text-stroke: .3px #172c68; }
.st1 { left: 5px; } .st2 { left: 42px; } .sidetabs .sx { left: 126px; top: 2px; -webkit-text-stroke: 0; }
.thumbwrap { flex: 1; display: flex; min-height: 0; }
.thumbs { flex: 1; background: linear-gradient(#81a3d7, #7699d0 25%, #658ac3 50%, #527ab2 75%, #638dcb); padding: 2px 0 0 2px; display: flex; flex-direction: column; gap: 2px; overflow: hidden; }
.thumb { width: 120px; height: 84px; display: flex; padding: 3px 3px; flex: none; }
.num { width: 10px; flex: none; color: #f1f6fd; font-size: 7px; padding-top: 4px; text-shadow: 0 0 1px #4a6ea5; white-space: nowrap; -webkit-text-stroke: .3px #f1f6fd; }
.active { background: linear-gradient(#fdd49a, #f7ae50 35%, #ef9730 65%, #f8b45b); border: 1px solid #d8a562; padding: 2px; }
.mini { width: 104px; height: 78px; flex: none; background: #eeece1; box-shadow: 1px 1px 1px #34578b; border: 1px solid #c8c6b9; }
.tiny { font-size: 3.600px; fill: #222; font-family: "Open Sans", sans-serif; white-space: pre; stroke: #222; stroke-width: .15; }
.thanks { font-size: 6px; fill: #222; }
.sbar { background: #7c9bc9; flex: none; }
.side { width: 12px; background: #6c8dbf; border-left: 1px solid #9ab9e4; }
.editor { flex: 1; display: flex; flex-direction: column; min-width: 0; }
.canvas { height: 331px; flex: none; position: relative; display: flex; justify-content: flex-end; background: linear-gradient(#a3c1eb 0, #89aada 25%, #6d90c8 55%, #6689bd 68%, #527ab0 82%, #618bc7 100%); }
.swoosh { position: absolute; left: 0; top: 0; }
.slide { width: 411px; height: 308px; margin: 11px 153px 0 0; background: #eeece1; box-shadow: 1px 1px 2px 1px #355887; position: relative; }
.main { width: 10px; background: #7193c7; border-left: 1px solid #9dbce6; }
.title { font-family: Lato, "Open Sans", sans-serif; font-size: 23.500px; fill: #111; }
.ink { stroke: #181818; stroke-linecap: round; stroke-linejoin: round; }
.slide svg { stroke-width: 1.600px; }
.slide text { stroke: none; }
.node { font-family: Lato, "Open Sans", sans-serif; font-size: 16px; fill: #111; }
.edge { font-family: Lato, "Open Sans", sans-serif; font-size: 8.700px; fill: #222; }
.notes { margin-top: 3px; height: 24px; background: #fff; display: flex; justify-content: space-between; color: #111; font: 10.500px/1 Lato, "Open Sans", sans-serif; }
.notes span { padding: 5px 0 0 6px; letter-spacing: -.13px; }
.nb { width: 10px; background: #9bb9e4; }
.status { height: 14px; flex: none; display: flex; background: linear-gradient(#dce9fa, #c8dcf7 45%, #b1cff5 50%, #d3e5fb); border-top: 1px solid #81a6dc; align-items: center; color: #26457e; font-size: 6.900px; white-space: nowrap; -webkit-text-stroke: .1px #26457e; }
.s1 { padding-left: 5px; width: 53px; border-right: 1px solid #9cb9e1; line-height: 13px; }
.s2 { padding-left: 7px; width: 63px; line-height: 13px; }
.spell { width: 12px; margin-left: 1px; } .rule { width: 1px; height: 12px; background: #9cb9e1; margin-left: 4px; }
.zoom { margin-left: auto; fill: #26457e; font-size: 7px; -webkit-text-stroke: 0; }
.taskbar { height: 25px; flex: none; display: flex; align-items: center; background: linear-gradient(90deg, #07131a, #0b1218 25%, #1c2a34 42%, #1a2831 65%, #15232b 85%, #090e12); border-top: 1px solid #3d4a56; }
.task { display: flex; align-items: center; justify-content: center; height: 24px; flex: none; }
.start { width: 34px; } .plain { width: 43px; }
.box { width: 36px; margin-right: 3px; border: 1px solid #6c7478; border-radius: 2px; background: linear-gradient(145deg, #777b7d, #393e40 50%, #292d2f); }
.edge-app { width: 40px; margin-left: -1px; }
.light { background: linear-gradient(145deg, #b9bbbc, #858789); border-color: #b3b7b8; }
.gold { background: linear-gradient(115deg, #d8b34e, #e2c371 50%, #d4a83c); border-color: #f0da98; }
.tray { margin-left: auto; }
.clock { width: 39px; margin-left: 5px; color: #f2f4f5; display: flex; flex-direction: column; gap: 3px; align-items: center; font-size: 7.300px; letter-spacing: -.08px; white-space: nowrap; }
.peek { width: 8px; height: 24px; margin-left: 6px; margin-right: 1px; border: 1px solid #4c5357; background: linear-gradient(135deg, #33393d, #0c0f11); }
</style>
